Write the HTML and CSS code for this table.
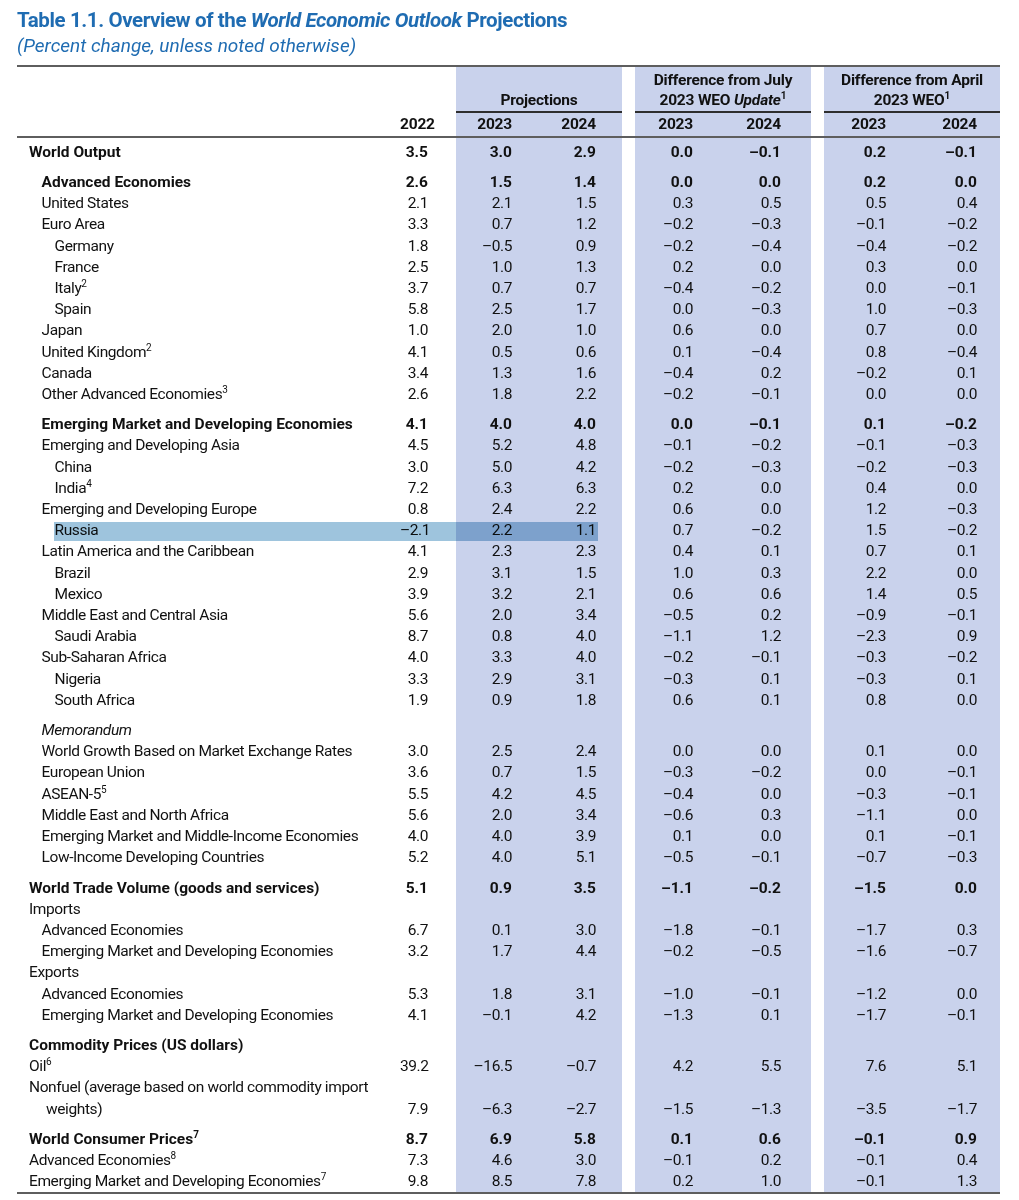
FILE: index.html
```html
<!DOCTYPE html>
<html lang="en">
<head>
<meta charset="utf-8">
<title>Table 1.1. Overview of the World Economic Outlook Projections</title>
<link rel="stylesheet" href="styles.css">
</head>
<body>
<h1 class="title">Table 1.1. Overview of the <i>World Economic Outlook</i> Projections</h1>
<p class="sub">(Percent change, unless noted otherwise)</p>

<div class="tbl">
  <div class="hg">
    <div class="blank"></div>
    <div class="grp g1">Projections</div>
    <div class="grp g2">Difference from July<br>2023 WEO <i>Update</i><sup>1</sup></div>
    <div class="grp g3">Difference from April<br>2023 WEO<sup>1</sup></div>
  </div>
  <div class="r hy">
    <div class="lb"></div><div>2022</div><div>2023</div><div>2024</div><div>2023</div><div>2024</div><div>2023</div><div>2024</div>
  </div>

  <div class="bd">
    <div class="r b"><div class="lb l0">World Output</div><div>3.5</div><div>3.0</div><div>2.9</div><div>0.0</div><div>–0.1</div><div>0.2</div><div>–0.1</div></div>

    <div class="r b sp"><div class="lb l1">Advanced Economies</div><div>2.6</div><div>1.5</div><div>1.4</div><div>0.0</div><div>0.0</div><div>0.2</div><div>0.0</div></div>
    <div class="r"><div class="lb l1">United States</div><div>2.1</div><div>2.1</div><div>1.5</div><div>0.3</div><div>0.5</div><div>0.5</div><div>0.4</div></div>
    <div class="r"><div class="lb l1">Euro Area</div><div>3.3</div><div>0.7</div><div>1.2</div><div>–0.2</div><div>–0.3</div><div>–0.1</div><div>–0.2</div></div>
    <div class="r"><div class="lb l2">Germany</div><div>1.8</div><div>–0.5</div><div>0.9</div><div>–0.2</div><div>–0.4</div><div>–0.4</div><div>–0.2</div></div>
    <div class="r"><div class="lb l2">France</div><div>2.5</div><div>1.0</div><div>1.3</div><div>0.2</div><div>0.0</div><div>0.3</div><div>0.0</div></div>
    <div class="r"><div class="lb l2">Italy<sup>2</sup></div><div>3.7</div><div>0.7</div><div>0.7</div><div>–0.4</div><div>–0.2</div><div>0.0</div><div>–0.1</div></div>
    <div class="r"><div class="lb l2">Spain</div><div>5.8</div><div>2.5</div><div>1.7</div><div>0.0</div><div>–0.3</div><div>1.0</div><div>–0.3</div></div>
    <div class="r"><div class="lb l1">Japan</div><div>1.0</div><div>2.0</div><div>1.0</div><div>0.6</div><div>0.0</div><div>0.7</div><div>0.0</div></div>
    <div class="r"><div class="lb l1">United Kingdom<sup>2</sup></div><div>4.1</div><div>0.5</div><div>0.6</div><div>0.1</div><div>–0.4</div><div>0.8</div><div>–0.4</div></div>
    <div class="r"><div class="lb l1">Canada</div><div>3.4</div><div>1.3</div><div>1.6</div><div>–0.4</div><div>0.2</div><div>–0.2</div><div>0.1</div></div>
    <div class="r"><div class="lb l1">Other Advanced Economies<sup>3</sup></div><div>2.6</div><div>1.8</div><div>2.2</div><div>–0.2</div><div>–0.1</div><div>0.0</div><div>0.0</div></div>

    <div class="r b sp"><div class="lb l1">Emerging Market and Developing Economies</div><div>4.1</div><div>4.0</div><div>4.0</div><div>0.0</div><div>–0.1</div><div>0.1</div><div>–0.2</div></div>
    <div class="r"><div class="lb l1">Emerging and Developing Asia</div><div>4.5</div><div>5.2</div><div>4.8</div><div>–0.1</div><div>–0.2</div><div>–0.1</div><div>–0.3</div></div>
    <div class="r"><div class="lb l2">China</div><div>3.0</div><div>5.0</div><div>4.2</div><div>–0.2</div><div>–0.3</div><div>–0.2</div><div>–0.3</div></div>
    <div class="r"><div class="lb l2">India<sup>4</sup></div><div>7.2</div><div>6.3</div><div>6.3</div><div>0.2</div><div>0.0</div><div>0.4</div><div>0.0</div></div>
    <div class="r"><div class="lb l1">Emerging and Developing Europe</div><div>0.8</div><div>2.4</div><div>2.2</div><div>0.6</div><div>0.0</div><div>1.2</div><div>–0.3</div></div>
    <div class="r hl"><div class="lb l2">Russia</div><div>–2.1</div><div>2.2</div><div>1.1</div><div>0.7</div><div>–0.2</div><div>1.5</div><div>–0.2</div><span class="mark"></span></div>
    <div class="r"><div class="lb l1">Latin America and the Caribbean</div><div>4.1</div><div>2.3</div><div>2.3</div><div>0.4</div><div>0.1</div><div>0.7</div><div>0.1</div></div>
    <div class="r"><div class="lb l2">Brazil</div><div>2.9</div><div>3.1</div><div>1.5</div><div>1.0</div><div>0.3</div><div>2.2</div><div>0.0</div></div>
    <div class="r"><div class="lb l2">Mexico</div><div>3.9</div><div>3.2</div><div>2.1</div><div>0.6</div><div>0.6</div><div>1.4</div><div>0.5</div></div>
    <div class="r"><div class="lb l1">Middle East and Central Asia</div><div>5.6</div><div>2.0</div><div>3.4</div><div>–0.5</div><div>0.2</div><div>–0.9</div><div>–0.1</div></div>
    <div class="r"><div class="lb l2">Saudi Arabia</div><div>8.7</div><div>0.8</div><div>4.0</div><div>–1.1</div><div>1.2</div><div>–2.3</div><div>0.9</div></div>
    <div class="r"><div class="lb l1">Sub-Saharan Africa</div><div>4.0</div><div>3.3</div><div>4.0</div><div>–0.2</div><div>–0.1</div><div>–0.3</div><div>–0.2</div></div>
    <div class="r"><div class="lb l2">Nigeria</div><div>3.3</div><div>2.9</div><div>3.1</div><div>–0.3</div><div>0.1</div><div>–0.3</div><div>0.1</div></div>
    <div class="r"><div class="lb l2">South Africa</div><div>1.9</div><div>0.9</div><div>1.8</div><div>0.6</div><div>0.1</div><div>0.8</div><div>0.0</div></div>

    <div class="r sp"><div class="lb l1 it">Memorandum</div></div>
    <div class="r"><div class="lb l1">World Growth Based on Market Exchange Rates</div><div>3.0</div><div>2.5</div><div>2.4</div><div>0.0</div><div>0.0</div><div>0.1</div><div>0.0</div></div>
    <div class="r"><div class="lb l1">European Union</div><div>3.6</div><div>0.7</div><div>1.5</div><div>–0.3</div><div>–0.2</div><div>0.0</div><div>–0.1</div></div>
    <div class="r"><div class="lb l1">ASEAN-5<sup>5</sup></div><div>5.5</div><div>4.2</div><div>4.5</div><div>–0.4</div><div>0.0</div><div>–0.3</div><div>–0.1</div></div>
    <div class="r"><div class="lb l1">Middle East and North Africa</div><div>5.6</div><div>2.0</div><div>3.4</div><div>–0.6</div><div>0.3</div><div>–1.1</div><div>0.0</div></div>
    <div class="r"><div class="lb l1">Emerging Market and Middle-Income Economies</div><div>4.0</div><div>4.0</div><div>3.9</div><div>0.1</div><div>0.0</div><div>0.1</div><div>–0.1</div></div>
    <div class="r"><div class="lb l1">Low-Income Developing Countries</div><div>5.2</div><div>4.0</div><div>5.1</div><div>–0.5</div><div>–0.1</div><div>–0.7</div><div>–0.3</div></div>

    <div class="r b sp"><div class="lb l0">World Trade Volume (goods and services)</div><div>5.1</div><div>0.9</div><div>3.5</div><div>–1.1</div><div>–0.2</div><div>–1.5</div><div>0.0</div></div>
    <div class="r"><div class="lb l0">Imports</div></div>
    <div class="r"><div class="lb l1">Advanced Economies</div><div>6.7</div><div>0.1</div><div>3.0</div><div>–1.8</div><div>–0.1</div><div>–1.7</div><div>0.3</div></div>
    <div class="r"><div class="lb l1">Emerging Market and Developing Economies</div><div>3.2</div><div>1.7</div><div>4.4</div><div>–0.2</div><div>–0.5</div><div>–1.6</div><div>–0.7</div></div>
    <div class="r"><div class="lb l0">Exports</div></div>
    <div class="r"><div class="lb l1">Advanced Economies</div><div>5.3</div><div>1.8</div><div>3.1</div><div>–1.0</div><div>–0.1</div><div>–1.2</div><div>0.0</div></div>
    <div class="r"><div class="lb l1">Emerging Market and Developing Economies</div><div>4.1</div><div>–0.1</div><div>4.2</div><div>–1.3</div><div>0.1</div><div>–1.7</div><div>–0.1</div></div>

    <div class="r b sp"><div class="lb l0">Commodity Prices (US dollars)</div></div>
    <div class="r"><div class="lb l0">Oil<sup>6</sup></div><div>39.2</div><div>–16.5</div><div>–0.7</div><div>4.2</div><div>5.5</div><div>7.6</div><div>5.1</div></div>
    <div class="r"><div class="lb l0">Nonfuel (average based on world commodity import</div></div>
    <div class="r"><div class="lb lw">weights)</div><div>7.9</div><div>–6.3</div><div>–2.7</div><div>–1.5</div><div>–1.3</div><div>–3.5</div><div>–1.7</div></div>

    <div class="r b sp"><div class="lb l0">World Consumer Prices<sup>7</sup></div><div>8.7</div><div>6.9</div><div>5.8</div><div>0.1</div><div>0.6</div><div>–0.1</div><div>0.9</div></div>
    <div class="r"><div class="lb l0">Advanced Economies<sup>8</sup></div><div>7.3</div><div>4.6</div><div>3.0</div><div>–0.1</div><div>0.2</div><div>–0.1</div><div>0.4</div></div>
    <div class="r"><div class="lb l0">Emerging Market and Developing Economies<sup>7</sup></div><div>9.8</div><div>8.5</div><div>7.8</div><div>0.2</div><div>1.0</div><div>–0.1</div><div>1.3</div></div>
  </div>
</div>
</body>
</html>
```

FILE: styles.css
```css
body {
  margin: 0;
  padding: 8px 0 0 17px;
  width: 983px;
  font-family: Roboto, "Liberation Sans", Arial, sans-serif;
  color: #111;
  background: #fff;
}

.title {
  margin: 0;
  font-size: 20.5px;
  line-height: 24px;
  font-weight: 700;
  letter-spacing: -0.4px;
  color: #1f6cb2;
}

.sub {
  margin: 3px 0 0;
  font-size: 19px;
  line-height: 22px;
  font-style: italic;
  color: #1f6cb2;
}

.tbl {
  margin-top: 8px;
  border-top: 2px solid #5e5e5e;
  border-bottom: 2px solid #5e5e5e;
  font-size: 15.5px;
  letter-spacing: -0.4px;
  background: linear-gradient(to right,
    #fff 0, #fff 439px,
    #c9d2ec 439px, #c9d2ec 605px,
    #fff 605px, #fff 618px,
    #c9d2ec 618px, #c9d2ec 794px,
    #fff 794px, #fff 807px,
    #c9d2ec 807px, #c9d2ec 983px);
}

sup {
  font-size: 10px;
  line-height: 0;
  letter-spacing: 0;
  vertical-align: 6px;
}

/* header */
.hg {
  display: grid;
  grid-template-columns: 439px 166px 13px 176px 13px 176px;
  padding-top: 3px;
  font-weight: 700;
  letter-spacing: -0.2px;
  line-height: 20px;
}
.grp {
  align-self: end;
  text-align: center;
  padding-bottom: 1px;
  border-bottom: 2px solid #2e2e2e;
}
.g1 { grid-column: 2; }
.g2 { grid-column: 4; }
.g3 { grid-column: 6; }

.r {
  display: grid;
  grid-template-columns: 383px 56px 83px 96px 88px 101px 88px 88px;
  line-height: 21.2px;
  white-space: nowrap;
}
.r > * { text-align: right; }
.r > :nth-child(2) { padding-right: 28px; }
.r > :nth-child(3) { padding-right: 27px; }
.r > :nth-child(4) { padding-right: 39px; }
.r > :nth-child(5) { padding-right: 30px; }
.r > :nth-child(6) { padding-right: 43px; }
.r > :nth-child(7) { padding-right: 26px; }
.r > :nth-child(8) { padding-right: 23px; }
.r > .lb { text-align: left; }

.hy {
  font-weight: 700;
  letter-spacing: -0.2px;
  line-height: 20px;
  padding-top: 1px;
  padding-bottom: 2px;
  border-bottom: 2px solid #5e5e5e;
}

.bd {
  padding-top: 3.8px;
  padding-bottom: 0;
}

.b { font-weight: 700; letter-spacing: 0; }
.sp > * { padding-top: 9px; }

.l0 { padding-left: 12px; }
.l1 { padding-left: 24.5px; }
.l2 { padding-left: 37.5px; }
.lw { padding-left: 29px; }
.it { font-style: italic; }

/* highlight annotation over the Russia row */
.hl { position: relative; }
.mark {
  position: absolute;
  left: 37px;
  width: 544px;
  top: 2px;
  bottom: 0;
  background: #9ec4dd;
  mix-blend-mode: multiply;
}
```
